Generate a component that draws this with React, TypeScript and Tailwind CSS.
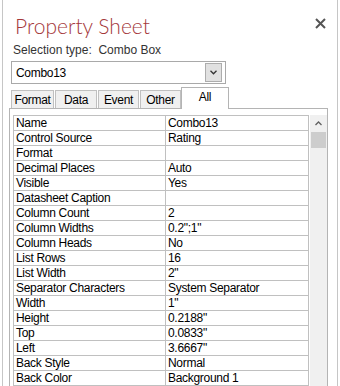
import React from 'react';

const props: [string, string][] = [
  ['Name', 'Combo13'],
  ['Control Source', 'Rating'],
  ['Format', ''],
  ['Decimal Places', 'Auto'],
  ['Visible', 'Yes'],
  ['Datasheet Caption', ''],
  ['Column Count', '2'],
  ['Column Widths', '0.2";1"'],
  ['Column Heads', 'No'],
  ['List Rows', '16'],
  ['List Width', '2"'],
  ['Separator Characters', 'System Separator'],
  ['Width', '1"'],
  ['Height', '0.2188"'],
  ['Top', '0.0833"'],
  ['Left', '3.6667"'],
  ['Back Style', 'Normal'],
  ['Back Color', 'Background 1'],
];

const tabs = [
  { label: 'Format', w: 'w-[43px]' },
  { label: 'Data', w: 'w-[42px]' },
  { label: 'Event', w: 'w-[41px]' },
  { label: 'Other', w: 'w-[41px]' },
];

export default function App() {
  return (
    <div className="w-[340px] h-[386px] overflow-hidden bg-white font-['Liberation_Sans',sans-serif] text-[12px] tracking-[-0.3px] text-black">
      <div className="ml-[2px] w-[336px] h-full border-x border-[#c6c6c6] flex flex-col">
        {/* header */}
        <div className="flex justify-between items-start mt-[11px] h-[29px]">
          <div className="pl-[12px] font-['Lato',sans-serif] font-light text-[21px] tracking-normal leading-[29px] text-[#a4373a]">
            Property Sheet
          </div>
          <svg width="11" height="11" viewBox="0 0 11 11" className="mt-[7px] mr-[11px]">
            <path d="M1 1 L10 10 M10 1 L1 10" stroke="#555" strokeWidth="2" />
          </svg>
        </div>

        <div className="pl-[10px] mt-[3px] leading-[14px] tracking-normal text-[#333] whitespace-pre">Selection type:  Combo Box</div>

        {/* combo */}
        <div className="ml-[8px] mt-[4px] w-[215px] h-[23px] border border-[#a9a9a9] flex items-center justify-between pl-[4px] pr-[3px]">
          <span>Combo13</span>
          <div className="w-[17px] h-[19px] bg-[#e1e1e1] border border-[#adadad] flex items-center justify-center">
            <svg width="7" height="5" viewBox="0 0 7 5">
              <path d="M0.5 0.8 L3.5 3.8 L6.5 0.8" stroke="#333" strokeWidth="1.3" fill="none" />
            </svg>
          </div>
        </div>

        {/* tabs */}
        <div className="flex items-end gap-[1px] ml-[8px] mt-[3px] relative z-10">
          {tabs.map((t) => (
            <div
              key={t.label}
              className={`${t.w} h-[18px] bg-[#f0f0f0] border border-b-0 border-[#c0c0c0] flex items-center justify-center leading-[16px]`}
            >
              {t.label}
            </div>
          ))}
          <div className="w-[48px] h-[22px] -mb-px -ml-px bg-white border border-b-0 border-[#b4b4b4] flex justify-center pt-[1px] leading-[16px]">
            All
          </div>
        </div>

        {/* panel */}
        <div className="ml-[6px] w-[319px] flex-1 border-x border-t border-[#b4b4b4] pt-[6px] pl-[3px] flex">
          <div className="w-[296px] border-l border-t border-[#c0c0c0] self-start">
            {props.map(([k, v]) => (
              <div key={k} className="flex h-[15px] border-b border-[#c0c0c0] leading-[14px]">
                <div className="w-[152px] border-r border-[#c0c0c0] pl-[2px] whitespace-nowrap overflow-hidden">{k}</div>
                <div className="w-[143px] border-r border-[#c0c0c0] pl-[2px] whitespace-nowrap overflow-hidden">{v}</div>
              </div>
            ))}
          </div>
          <div className="ml-[1px] w-[17px] bg-[#f0f0f0] flex flex-col items-center">
            <div className="h-[17px] flex items-center justify-center">
              <svg width="7" height="5" viewBox="0 0 7 5">
                <path d="M0.5 4 L3.5 1 L6.5 4" stroke="#606060" strokeWidth="1.3" fill="none" />
              </svg>
            </div>
            <div className="w-[15px] h-[16px] bg-[#cdcdcd]" />
          </div>
        </div>
      </div>
    </div>
  );
}
